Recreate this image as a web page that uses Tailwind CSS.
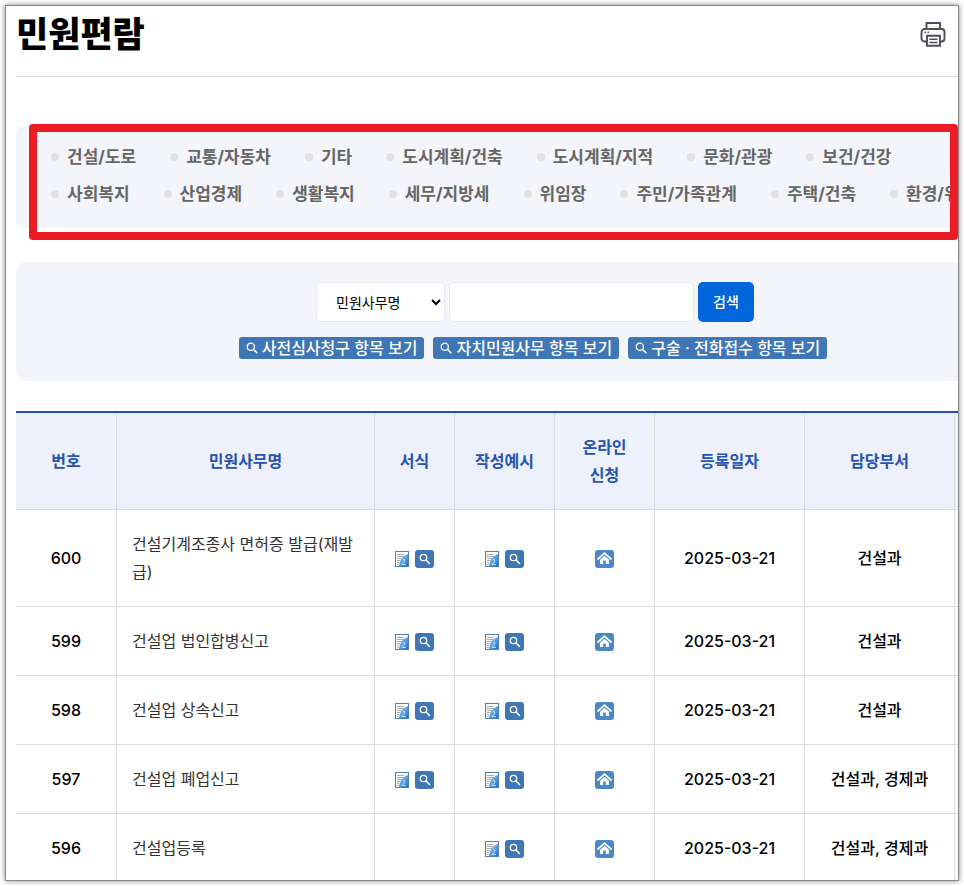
<!DOCTYPE html>
<html lang="ko">
<head>
<meta charset="utf-8">
<meta name="viewport" content="width=device-width, initial-scale=1">
<title>민원편람</title>
<script src="https://cdn.jsdelivr.net/npm/@tailwindcss/browser@4"></script>
</head>
<body class="h-screen overflow-hidden bg-white p-[5px] font-[Inter,'Noto_Sans_CJK_KR',sans-serif] text-base text-black">
<svg class="absolute size-0" aria-hidden="true">
  <defs>
    <linearGradient id="fold" x1="0" y1="0" x2="1" y2="1"><stop offset="0" stop-color="#9fd4f7"/><stop offset="1" stop-color="#1c6fd0"/></linearGradient>
  </defs>
  <symbol id="doc" viewBox="0 0 14 16">
    <rect x=".5" y=".5" width="13" height="15" fill="#fff" stroke="#4a7ebb"/>
    <path d="M2 3.500h7M2 5.500h7M2 7.500h6M2 9.500h3M2 11.500h2M2 13.500h1.500" stroke="#a9a9a9"/>
    <path d="M4 15C4.500 9 7.500 5 13 3v12z" fill="url(#fold)"/>
    <path d="M8 8.500l2 .5-1 2.500-2 2h4" fill="none" stroke="#d9f0ff" stroke-opacity=".8"/>
  </symbol>
  <symbol id="search" viewBox="0 0 19 18">
    <rect width="19" height="18" rx="3" fill="#3f76b5"/>
    <circle cx="8.500" cy="7.500" r="3.200" fill="none" stroke="#fff" stroke-width="1.300"/>
    <path d="M11 10l3.500 3.500" stroke="#fff" stroke-width="1.600" stroke-linecap="round"/>
  </symbol>
  <symbol id="glass" viewBox="0 0 12 12">
    <circle cx="4.800" cy="4.800" r="3.600" fill="none" stroke="#fff" stroke-width="1.300"/>
    <path d="M7.600 7.600l3.400 3.200" stroke="#fff" stroke-width="1.500" stroke-linecap="round"/>
  </symbol>
  <symbol id="home" viewBox="0 0 19 18">
    <rect width="19" height="18" rx="3" fill="#4a88c7"/>
    <path d="M2.500 9.500L9.500 3.200l7 6.300" fill="none" stroke="#fff" stroke-width="1.700"/>
    <path d="M5 9.700l4.500-4 4.500 4V14h-3.200v-3.500H8.200V14H5z" fill="#fff"/>
  </symbol>
</svg>

<main class="relative h-full overflow-hidden border border-[#8a8a8a] bg-white pl-[10px] shadow-[0_0_5px_rgba(0,0,0,0.5)]">
  <header class="flex h-[71px] items-start justify-between border-b border-[#dcdcdc] pr-3">
    <h1 class="pt-1 text-[35px] leading-[48px] font-black">민원편람</h1>
    <button type="button" aria-label="인쇄" class="mt-[15px]">
      <svg class="block size-[26px]" viewBox="0 0 26 26" fill="none" stroke="#4b4d57" stroke-width="1.900">
        <path d="M6.500 8V2h13.500v6"/>
        <path d="M7 20.500H4.500a3 3 0 0 1-3-3V11a3 3 0 0 1 3-3h17a3 3 0 0 1 3 3v6.500a3 3 0 0 1-3 3H20"/>
        <path d="M7 14.800h13v10H7z"/>
        <path d="M9.500 18.300h8M9.500 21.500h8M4.500 11.300H6M7.500 11.300H9" stroke-width="1.600"/>
      </svg>
    </button>
  </header>

  <div class="min-w-[1034px] pt-[50px]">
    <nav aria-label="민원 분류" class="rounded-[5px] bg-[#f4f5fa] pt-3 pb-[15px] pl-[35px]">
      <ul class="flex gap-x-[34px] text-[17px] leading-[37px] font-bold whitespace-nowrap text-[#666]">
        <li><a href="#" class="flex items-center gap-2"><span class="mb-0.5 size-2 rounded-full bg-[#e1e1e1]"></span>건설/도로</a></li>
        <li><a href="#" class="flex items-center gap-2"><span class="mb-0.5 size-2 rounded-full bg-[#e1e1e1]"></span>교통/자동차</a></li>
        <li><a href="#" class="flex items-center gap-2"><span class="mb-0.5 size-2 rounded-full bg-[#e1e1e1]"></span>기타</a></li>
        <li><a href="#" class="flex items-center gap-2"><span class="mb-0.5 size-2 rounded-full bg-[#e1e1e1]"></span>도시계획/건축</a></li>
        <li><a href="#" class="flex items-center gap-2"><span class="mb-0.5 size-2 rounded-full bg-[#e1e1e1]"></span>도시계획/지적</a></li>
        <li><a href="#" class="flex items-center gap-2"><span class="mb-0.5 size-2 rounded-full bg-[#e1e1e1]"></span>문화/관광</a></li>
        <li><a href="#" class="flex items-center gap-2"><span class="mb-0.5 size-2 rounded-full bg-[#e1e1e1]"></span>보건/건강</a></li>
      </ul>
      <ul class="flex gap-x-[34px] text-[17px] leading-[37px] font-bold whitespace-nowrap text-[#666]">
        <li><a href="#" class="flex items-center gap-2"><span class="mb-0.5 size-2 rounded-full bg-[#e1e1e1]"></span>사회복지</a></li>
        <li><a href="#" class="flex items-center gap-2"><span class="mb-0.5 size-2 rounded-full bg-[#e1e1e1]"></span>산업경제</a></li>
        <li><a href="#" class="flex items-center gap-2"><span class="mb-0.5 size-2 rounded-full bg-[#e1e1e1]"></span>생활복지</a></li>
        <li><a href="#" class="flex items-center gap-2"><span class="mb-0.5 size-2 rounded-full bg-[#e1e1e1]"></span>세무/지방세</a></li>
        <li><a href="#" class="flex items-center gap-2"><span class="mb-0.5 size-2 rounded-full bg-[#e1e1e1]"></span>위임장</a></li>
        <li><a href="#" class="flex items-center gap-2"><span class="mb-0.5 size-2 rounded-full bg-[#e1e1e1]"></span>주민/가족관계</a></li>
        <li><a href="#" class="flex items-center gap-2"><span class="mb-0.5 size-2 rounded-full bg-[#e1e1e1]"></span>주택/건축</a></li>
        <li><a href="#" class="flex items-center gap-2"><span class="mb-0.5 size-2 rounded-full bg-[#e1e1e1]"></span>환경/위생</a></li>
      </ul>
    </nav>

    <form class="mt-[34px] rounded-[10px] bg-[#f4f5fa] pt-5 pb-[22px]">
      <div class="flex justify-center gap-1 pl-1 text-sm">
        <select aria-label="검색 조건" class="h-10 w-[129px] rounded-[5px] border border-[#ece6f0] bg-white pl-[15px]"><option>민원사무명</option></select>
        <input type="text" aria-label="검색어" class="h-10 w-[245px] rounded-[5px] border border-[#e8e8f0] bg-white px-3">
        <button type="button" class="h-10 w-14 rounded-[5px] bg-[#0066d9] font-medium text-white">검색</button>
      </div>
      <div class="mt-[15px] flex justify-center gap-[9px] leading-[22px] font-medium text-white">
        <a href="#" class="flex items-center gap-1 rounded-[3px] bg-[#3f76b5] px-[7px]"><svg class="size-3"><use href="#glass"/></svg>사전심사청구 항목 보기</a>
        <a href="#" class="flex items-center gap-1 rounded-[3px] bg-[#3f76b5] px-[7px]"><svg class="size-3"><use href="#glass"/></svg>자치민원사무 항목 보기</a>
        <a href="#" class="flex items-center gap-1 rounded-[3px] bg-[#3f76b5] px-[7px]"><svg class="size-3"><use href="#glass"/></svg>구술 · 전화접수 항목 보기</a>
      </div>
    </form>

    <table class="mt-[30px] w-full table-fixed border-separate border-spacing-0 border-t-2 border-[#2553b0] text-center leading-7 [&_td]:border-r [&_td]:border-b [&_td]:border-[#dcdcdc] [&_td]:px-[15px] [&_td]:py-5 [&_th]:border-r [&_th]:border-b [&_th]:border-[#dcdcdc] [&_th]:px-[15px] [&_th]:py-5">
      <colgroup><col class="w-[101px]"><col class="w-[258px]"><col class="w-[80px]"><col class="w-[100px]"><col class="w-[100px]"><col class="w-[150px]"><col class="w-[150px]"><col></colgroup>
      <thead class="bg-[#eef1fb] text-[#2553b0]">
        <tr><th>번호</th><th>민원사무명</th><th>서식</th><th class="whitespace-nowrap">작성예시</th><th>온라인<br>신청</th><th>등록일자</th><th>담당부서</th><th></th></tr>
      </thead>
      <tbody class="font-medium">
        <tr>
          <td>600</td><td class="text-left font-normal text-[#333]">건설기계조종사 면허증 발급(재발급)</td>
          <td><a href="#" aria-label="서식" class="flex items-center justify-center gap-1.5 pt-0.5"><svg class="h-4 w-3.5 shrink-0"><use href="#doc"/></svg><svg class="h-[18px] w-[19px] shrink-0"><use href="#search"/></svg></a></td>
          <td><a href="#" aria-label="작성예시" class="flex items-center justify-center gap-1.5 pt-0.5"><svg class="h-4 w-3.5 shrink-0"><use href="#doc"/></svg><svg class="h-[18px] w-[19px] shrink-0"><use href="#search"/></svg></a></td>
          <td><a href="#" aria-label="온라인 신청" class="flex justify-center pt-0.5"><svg class="h-[18px] w-[19px]"><use href="#home"/></svg></a></td>
          <td>2025-03-21</td><td>건설과</td><td></td>
        </tr>
        <tr>
          <td>599</td><td class="text-left font-normal text-[#333]">건설업 법인합병신고</td>
          <td><a href="#" aria-label="서식" class="flex items-center justify-center gap-1.5 pt-0.5"><svg class="h-4 w-3.5 shrink-0"><use href="#doc"/></svg><svg class="h-[18px] w-[19px] shrink-0"><use href="#search"/></svg></a></td>
          <td><a href="#" aria-label="작성예시" class="flex items-center justify-center gap-1.5 pt-0.5"><svg class="h-4 w-3.5 shrink-0"><use href="#doc"/></svg><svg class="h-[18px] w-[19px] shrink-0"><use href="#search"/></svg></a></td>
          <td><a href="#" aria-label="온라인 신청" class="flex justify-center pt-0.5"><svg class="h-[18px] w-[19px]"><use href="#home"/></svg></a></td>
          <td>2025-03-21</td><td>건설과</td><td></td>
        </tr>
        <tr>
          <td>598</td><td class="text-left font-normal text-[#333]">건설업 상속신고</td>
          <td><a href="#" aria-label="서식" class="flex items-center justify-center gap-1.5 pt-0.5"><svg class="h-4 w-3.5 shrink-0"><use href="#doc"/></svg><svg class="h-[18px] w-[19px] shrink-0"><use href="#search"/></svg></a></td>
          <td><a href="#" aria-label="작성예시" class="flex items-center justify-center gap-1.5 pt-0.5"><svg class="h-4 w-3.5 shrink-0"><use href="#doc"/></svg><svg class="h-[18px] w-[19px] shrink-0"><use href="#search"/></svg></a></td>
          <td><a href="#" aria-label="온라인 신청" class="flex justify-center pt-0.5"><svg class="h-[18px] w-[19px]"><use href="#home"/></svg></a></td>
          <td>2025-03-21</td><td>건설과</td><td></td>
        </tr>
        <tr>
          <td>597</td><td class="text-left font-normal text-[#333]">건설업 폐업신고</td>
          <td><a href="#" aria-label="서식" class="flex items-center justify-center gap-1.5 pt-0.5"><svg class="h-4 w-3.5 shrink-0"><use href="#doc"/></svg><svg class="h-[18px] w-[19px] shrink-0"><use href="#search"/></svg></a></td>
          <td><a href="#" aria-label="작성예시" class="flex items-center justify-center gap-1.5 pt-0.5"><svg class="h-4 w-3.5 shrink-0"><use href="#doc"/></svg><svg class="h-[18px] w-[19px] shrink-0"><use href="#search"/></svg></a></td>
          <td><a href="#" aria-label="온라인 신청" class="flex justify-center pt-0.5"><svg class="h-[18px] w-[19px]"><use href="#home"/></svg></a></td>
          <td>2025-03-21</td><td>건설과, 경제과</td><td></td>
        </tr>
        <tr>
          <td>596</td><td class="text-left font-normal text-[#333]">건설업등록</td>
          <td></td>
          <td><a href="#" aria-label="작성예시" class="flex items-center justify-center gap-1.5 pt-0.5"><svg class="h-4 w-3.5 shrink-0"><use href="#doc"/></svg><svg class="h-[18px] w-[19px] shrink-0"><use href="#search"/></svg></a></td>
          <td><a href="#" aria-label="온라인 신청" class="flex justify-center pt-0.5"><svg class="h-[18px] w-[19px]"><use href="#home"/></svg></a></td>
          <td>2025-03-21</td><td>건설과, 경제과</td><td></td>
        </tr>
      </tbody>
    </table>
  </div>

  <!-- highlight around the category list -->
  <div class="pointer-events-none absolute top-[118px] right-0 left-[23px] h-[116px] rounded-[4px] border-8 border-[#ed1c24]"></div>
</main>
</body>
</html>
